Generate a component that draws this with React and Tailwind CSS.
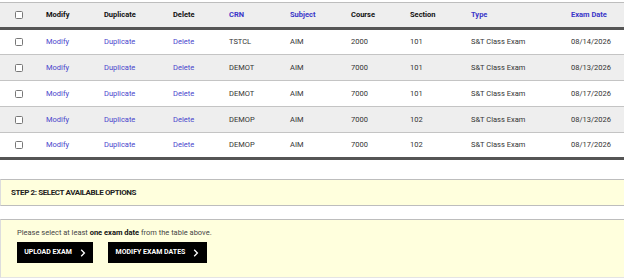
import React from 'react';

const rows = [
  { crn: 'TSTCL', subject: 'AIM', course: '2000', section: '101', type: 'S&T Class Exam', date: '08/14/2026' },
  { crn: 'DEMOT', subject: 'AIM', course: '7000', section: '101', type: 'S&T Class Exam', date: '08/13/2026' },
  { crn: 'DEMOT', subject: 'AIM', course: '7000', section: '101', type: 'S&T Class Exam', date: '08/17/2026' },
  { crn: 'DEMOP', subject: 'AIM', course: '7000', section: '102', type: 'S&T Class Exam', date: '08/13/2026' },
  { crn: 'DEMOP', subject: 'AIM', course: '7000', section: '102', type: 'S&T Class Exam', date: '08/17/2026' },
];

function Box() {
  return <span className="inline-block w-[8px] h-[8px] border border-[#777] rounded-[1.5px] bg-white align-middle" />;
}

function Chevron() {
  return (
    <svg width="6" height="8" viewBox="0 0 6 8" className="ml-[8px]">
      <path d="M1.2 0.8 L4.4 4 L1.2 7.2" fill="none" stroke="white" strokeWidth="1.3" />
    </svg>
  );
}

export default function App() {
  return (
    <div className="w-[627px] h-[280px] bg-white font-['Roboto',sans-serif] text-[7.5px] text-[#333] overflow-hidden">
      {/* Step 1 table */}
      <table className="table-fixed w-[624px] border-collapse mt-[2px]">
        <colgroup>
          <col className="w-[38px]" />
          <col className="w-[58px]" />
          <col className="w-[69px]" />
          <col className="w-[56px]" />
          <col className="w-[61px]" />
          <col className="w-[61px]" />
          <col className="w-[59px]" />
          <col className="w-[61px]" />
          <col className="w-[100px]" />
          <col className="w-[61px]" />
        </colgroup>
        <thead>
          <tr className="h-[26px] bg-[#eeeeee] border-t border-[#bdbdbd] border-b-[3px] border-b-[#555] font-bold text-left">
            <th className="text-center"><Box /></th>
            <th className="pl-2 text-[#111]">Modify</th>
            <th className="pl-2 text-[#111]">Duplicate</th>
            <th className="pl-2 text-[#111]">Delete</th>
            <th className="pl-2 text-[#3b36c9]">CRN</th>
            <th className="pl-2 text-[#3b36c9]">Subject</th>
            <th className="pl-2 text-[#111]">Course</th>
            <th className="pl-2 text-[#111]">Section</th>
            <th className="pl-2 text-[#3b36c9]">Type</th>
            <th className="pl-2 text-[#3b36c9]">Exam Date</th>
          </tr>
        </thead>
        <tbody className="border-b-[3px] border-b-[#555]">
          {rows.map((r, i) => (
            <tr key={i} className={`h-[26px] border-b border-[#c4c4c4] ${i % 2 === 1 ? 'bg-[#eeeeee]' : 'bg-white'}`}>
              <td className="text-center"><Box /></td>
              <td className="pl-2 text-[#4a44cc]">Modify</td>
              <td className="pl-2 text-[#4a44cc]">Duplicate</td>
              <td className="pl-2 text-[#4a44cc]">Delete</td>
              <td className="pl-2">{r.crn}</td>
              <td className="pl-2">{r.subject}</td>
              <td className="pl-2">{r.course}</td>
              <td className="pl-2">{r.section}</td>
              <td className="pl-2">{r.type}</td>
              <td className="pl-2">{r.date}</td>
            </tr>
          ))}
        </tbody>
      </table>

      {/* Step 2 */}
      <div className="w-[624px] mt-[19px] h-[27px] bg-[#ffffdd] border-y border-[#bdbdbd] border-l border-l-[#ddd] flex items-center pl-[10px]">
        <span className="font-bold text-[8px] text-[#222] tracking-[-0.05em]">STEP 2: SELECT AVAILABLE OPTIONS</span>
      </div>

      <div className="w-[624px] mt-[13px] h-[59px] bg-[#ffffdd] border-t border-[#bdbdbd] border-b border-b-[#e4e4e4] border-l border-l-[#ddd] pl-[16px] pt-[8px]">
        <p className="text-[7.5px] text-[#444] leading-[10px]">
          Please select at least <span className="font-bold text-[#111]">one exam date</span> from the table above.
        </p>
        <div className="flex gap-[15px] mt-[4px]">
          <button className="h-[21px] w-[76px] bg-black text-white font-bold text-[7px] flex items-center justify-center">
            UPLOAD EXAM<Chevron />
          </button>
          <button className="h-[21px] w-[99px] bg-black text-white font-bold text-[7px] flex items-center justify-center">
            MODIFY EXAM DATES<Chevron />
          </button>
        </div>
      </div>
    </div>
  );
}
